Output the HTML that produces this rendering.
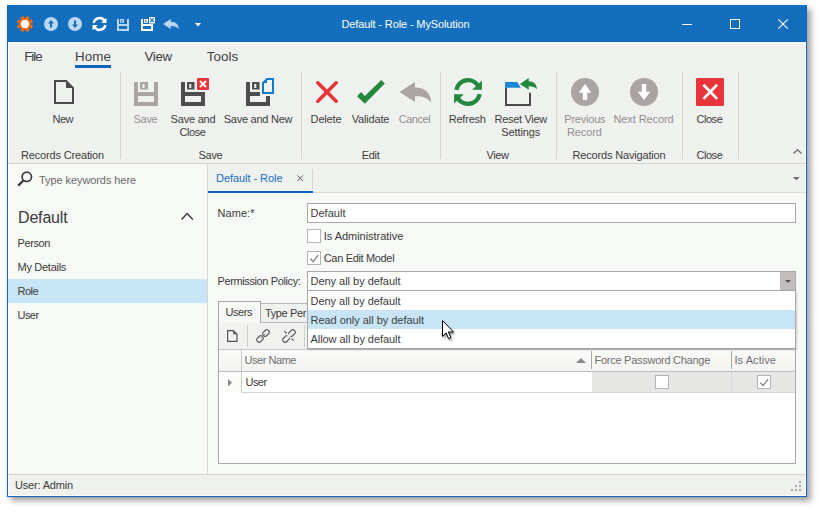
<!DOCTYPE html>
<html><head><meta charset="utf-8"><title>Default - Role - MySolution</title>
<style>
html,body{margin:0;padding:0;}
body{width:820px;height:512px;background:#ffffff;position:relative;overflow:hidden;font-family:"Liberation Sans",sans-serif;}
.a{position:absolute;}
.t{position:absolute;white-space:pre;line-height:normal;}
svg{position:absolute;overflow:visible;}
#win{left:7px;top:5px;width:800px;height:492px;background:#f7f9f6;box-shadow:4px 4px 6px rgba(0,0,0,0.36), -1px 1px 3px rgba(0,0,0,0.06);}
#title{left:7px;top:5px;width:800px;height:37px;background:#146ebe;}
#titleline{left:7px;top:41px;width:800px;height:1px;background:#0f64b4;}
#bl{left:7px;top:5px;width:1px;height:492px;background:#1467b9;}
#br{left:806px;top:5px;width:1px;height:492px;background:#1467b9;}
#bb{left:7px;top:496px;width:800px;height:1px;background:#1467b9;}
#ribbon{left:8px;top:42px;width:798px;height:121px;background:#eff1ee;}
#ribbonline{left:8px;top:163px;width:798px;height:1px;background:#d2d3d1;}
#hl-left{left:8px;top:42px;width:1px;height:454px;background:#fbfbf8;}
#hl-top{left:8px;top:42px;width:798px;height:1px;background:#fbfbf8;}
.sep{position:absolute;top:72px;width:1px;height:87px;background:#d4d5d3;}
#nav{left:9px;top:164px;width:198px;height:310px;background:#f7f9f6;}
#navline{left:207px;top:164px;width:1px;height:310px;background:#d6d7d5;}
#navsel{left:8px;top:279px;width:199px;height:24px;background:#c8e5f8;}
#tabhdr{left:208px;top:164px;width:598px;height:28px;background:#eff1ee;}
#tabhdrline{left:208px;top:192px;width:598px;height:1px;background:#dcdddb;}
#tabul{left:208px;top:191px;width:105px;height:2px;background:#0f65bc;}
#tabsep{left:312px;top:169px;width:1px;height:20px;background:#d4d5d3;}
#homeul{left:75px;top:65px;width:36px;height:3px;background:#0f65bc;}
#status{left:8px;top:475px;width:798px;height:21px;background:#eff1ee;}
#statusline{left:8px;top:474px;width:798px;height:1px;background:#d2d3d1;}
.inp{position:absolute;background:#ffffff;border:1px solid #a8a8a8;box-sizing:border-box;}
.cb{position:absolute;width:14px;height:14px;background:#ffffff;border:1px solid #b4b4b4;box-sizing:border-box;}
#hl-right{left:805px;top:42px;width:1px;height:454px;background:#fbfbf8;}
#hl-bot{left:8px;top:495px;width:798px;height:1px;background:#fbfbf8;}

</style></head>
<body>
<div class="a" id="win"></div>
<div class="a" id="title"></div>
<div class="a" id="titleline"></div>
<div class="a" id="ribbon"></div>
<div class="a" id="hl-top"></div>
<div class="a" id="nav"></div>
<div class="a" id="navline"></div>
<div class="a" id="tabhdr"></div>
<div class="a" id="tabsep"></div>
<div class="a" id="homeul"></div>
<div class="a" id="status"></div>
<div class="a" id="hl-left"></div><div class="a" id="hl-right"></div><div class="a" id="hl-bot"></div>
<div class="a" id="navsel"></div>
<div class="a" id="ribbonline"></div><div class="a" id="tabhdrline"></div><div class="a" id="statusline"></div>
<div class="a" id="tabul"></div>
<div class="a" id="bl"></div><div class="a" id="br"></div><div class="a" id="bb"></div>
<div class="sep" style="left:120px"></div>
<div class="sep" style="left:301px"></div>
<div class="sep" style="left:440px"></div>
<div class="sep" style="left:556px"></div>
<div class="sep" style="left:682px"></div>
<div class="sep" style="left:738px"></div>

<!-- form -->
<div class="inp" style="left:307px;top:203px;width:489px;height:20px"></div>
<div class="cb" style="left:307px;top:229px"></div>
<div class="cb" style="left:307px;top:251px"></div>
<div class="inp" style="left:307px;top:271px;width:489px;height:20px"></div>
<div class="a" style="left:780px;top:272px;width:15px;height:18px;background:#c3bdbd"></div>

<!-- tab panel -->
<div class="a" style="left:218px;top:322px;width:578px;height:142px;background:#ffffff;border:1px solid #a8a8a8;box-sizing:border-box"></div>
<div class="a" style="left:260px;top:303px;width:60px;height:20px;background:#eff1ee;border:1px solid #b8b8b8;box-sizing:border-box"></div>
<div class="a" style="left:218px;top:301px;width:43px;height:22px;background:#f7f9f6;border:1px solid #a8a8a8;border-bottom:none;box-sizing:border-box"></div>
<div class="a" style="left:219px;top:323px;width:576px;height:26px;background:#f1f2f0"></div>
<div class="a" style="left:219px;top:349px;width:576px;height:1px;background:#c4c4c4"></div>
<div class="a" style="left:219px;top:350px;width:576px;height:21px;background:linear-gradient(#fafbf9,#f3f4f2)"></div>
<div class="a" style="left:219px;top:371px;width:576px;height:1px;background:#bdbdbd"></div>
<div class="a" style="left:219px;top:372px;width:22px;height:20px;background:#fbfcfa"></div>
<div class="a" style="left:241px;top:350px;width:1px;height:43px;background:#c8c8c8"></div>
<div class="a" style="left:591px;top:351px;width:1px;height:18px;background:#a6a6a6"></div>
<div class="a" style="left:731px;top:351px;width:1px;height:18px;background:#a6a6a6"></div>
<div class="a" style="left:592px;top:372px;width:203px;height:20px;background:#e6e7e5"></div>
<div class="a" style="left:731px;top:372px;width:1px;height:20px;background:#d8d8d8"></div>
<div class="a" style="left:241px;top:392px;width:554px;height:1px;background:#d6d6d6"></div>
<div class="cb" style="left:655px;top:375px"></div>
<div class="cb" style="left:757px;top:375px"></div>
<div class="a" style="left:247px;top:325px;width:1px;height:22px;background:#d0d1cf"></div>
<div class="a" style="left:304px;top:325px;width:1px;height:22px;background:#d0d1cf"></div>
<!-- QAT icons -->
<svg style="left:17px;top:16px" width="16" height="16" viewBox="-8 -8 16 16"><g fill="#ff6a00"><circle r="5.9"/><rect x="-1.6" y="-8" width="3.2" height="4" transform="rotate(22.5)"/><rect x="-1.6" y="-8" width="3.2" height="4" transform="rotate(67.5)"/><rect x="-1.6" y="-8" width="3.2" height="4" transform="rotate(112.5)"/><rect x="-1.6" y="-8" width="3.2" height="4" transform="rotate(157.5)"/><rect x="-1.6" y="-8" width="3.2" height="4" transform="rotate(202.5)"/><rect x="-1.6" y="-8" width="3.2" height="4" transform="rotate(247.5)"/><rect x="-1.6" y="-8" width="3.2" height="4" transform="rotate(292.5)"/><rect x="-1.6" y="-8" width="3.2" height="4" transform="rotate(337.5)"/></g><circle r="4.2" fill="#ffffff"/></svg>

<svg style="left:44px;top:17px" width="14" height="14" viewBox="0 0 14 14"><circle cx="7" cy="7" r="7" fill="#b9d6f2"/><path d="M7 3 L10 6.6 L8 6.6 L8 10.6 L6 10.6 L6 6.6 L4 6.6 Z" fill="#146ebe"/></svg>
<svg style="left:68px;top:17px" width="14" height="14" viewBox="0 0 14 14"><circle cx="7" cy="7" r="7" fill="#b9d6f2"/><path d="M7 11 L10 7.4 L8 7.4 L8 3.4 L6 3.4 L6 7.4 L4 7.4 Z" fill="#146ebe"/></svg>

<!-- qat refresh -->
<svg style="left:92px;top:17px" width="15" height="14" viewBox="0 0 28 28">
<g fill="none" stroke="#ffffff" stroke-width="5"><path d="M2.4 11.8 A11.75 11.75 0 0 1 24.6 9"/><path d="M25.6 16.2 A11.75 11.75 0 0 1 3.4 19"/></g>
<path d="M28 1.5 L28 12 L17.5 12 Z M0 26.5 L0 16 L10.5 16 Z" fill="#ffffff"/></svg>

<!-- qat save (disabled) -->
<svg style="left:117px;top:19px" width="12" height="12" viewBox="0 0 24 24" fill="#b9d6f2">
<path d="M0 0 H4 V10 H20 V0 H24 V24 H0 Z M4 14 V20 H20 V14 Z" fill-rule="evenodd"/><path d="M6 0 H14 V7.5 H6 Z M8.5 2 V6 H10.5 V2 Z" fill-rule="evenodd"/></svg>
<!-- qat save & close -->
<svg style="left:141px;top:19px" width="12" height="12" viewBox="0 0 24 24" fill="#ffffff">
<path d="M0 0 H4 V10 H24 V24 H0 Z M4 14 V20 H20 V14 Z" fill-rule="evenodd"/><path d="M6 0 H14 V7.5 H6 Z M8.5 2 V6 H10.5 V2 Z" fill-rule="evenodd"/></svg>
<svg style="left:149.2px;top:16.5px" width="6" height="6.5" viewBox="0 0 6 6.5"><rect width="6" height="6.5" fill="#ffffff"/><path d="M1.2 1.4 L4.8 5.1 M4.8 1.4 L1.2 5.1" stroke="#146ebe" stroke-width="1.1"/></svg>
<!-- qat undo -->
<svg style="left:162.7px;top:19px" width="16" height="10.5" viewBox="0 0 32 21"><path d="M0 10 L15.5 0 L15.5 5.5 C25.5 5.5 31.5 11 31.7 20.6 C28.5 16 23.5 14.2 15.5 14.2 L15.5 20 Z" fill="#b9d6f2"/></svg>
<!-- qat dropdown -->
<svg style="left:194.6px;top:23px" width="6" height="3.5" viewBox="0 0 6 3.5"><path d="M0 0 H6 L3 3.5 Z" fill="#ffffff"/></svg>

<!-- window buttons -->
<div class="a" style="left:682px;top:24px;width:10px;height:1px;background:#ffffff"></div>
<div class="a" style="left:730px;top:19px;width:10px;height:10px;border:1px solid #ffffff;box-sizing:border-box"></div>
<svg style="left:778px;top:19px" width="10" height="10" viewBox="0 0 10 10"><path d="M0.3 0.3 L9.7 9.7 M9.7 0.3 L0.3 9.7" stroke="#ffffff" stroke-width="1.1"/></svg>

<!-- New -->
<svg style="left:54px;top:80px" width="20" height="24" viewBox="0 0 20 24"><path d="M1 1 H12 L19 8 V23 H1 Z" fill="none" stroke="#4b4b4b" stroke-width="2"/><path d="M12 1 V8 H19 Z" fill="#4b4b4b"/></svg>
<!-- Save (disabled) -->
<svg style="left:134px;top:82px" width="24" height="24" viewBox="0 0 24 24" fill="#aaa4a4">
<path d="M0 0 H4 V10 H20 V0 H24 V24 H0 Z M4 14 V20 H20 V14 Z" fill-rule="evenodd"/><path d="M6 0 H14 V7.5 H6 Z M8.5 2 V6 H10.5 V2 Z" fill-rule="evenodd"/></svg>
<!-- Save and Close -->
<svg style="left:181px;top:82px" width="24" height="24" viewBox="0 0 24 24" fill="#4d4d4d">
<path d="M0 0 H4 V10 H24 V24 H0 Z M4 14 V20 H20 V14 Z" fill-rule="evenodd"/><path d="M6 0 H13.5 V7.5 H6 Z M8.3 2 V6 H10.3 V2 Z" fill-rule="evenodd"/></svg>
<svg style="left:196px;top:77px" width="14" height="14" viewBox="0 0 14 14"><rect width="14" height="14" fill="#eff1ee"/><rect x="1" y="1" width="12" height="12" rx="1" fill="#e8353c"/><path d="M4 4 L10 10 M10 4 L4 10" stroke="#ffffff" stroke-width="1.8"/></svg>
<!-- Save and New -->
<svg style="left:246px;top:82px" width="24" height="24" viewBox="0 0 24 24" fill="#4d4d4d">
<path d="M0 0 H4 V10 H14 V14 H4 V20 H20 V14 H24 V24 H0 Z"/><path d="M6 0 H13.5 V7.5 H6 Z M8.3 2 V6 H10.3 V2 Z" fill-rule="evenodd"/></svg>
<svg style="left:261px;top:77px" width="14" height="18" viewBox="0 0 14 18"><path d="M0 0 H14 V18 H0 Z" fill="#eff1ee"/><path d="M6 2 H12 V16 H2 V6 Z" fill="#f3f4f2" stroke="#0f7bd2" stroke-width="2"/><path d="M6 2 V6 H2 Z" fill="#0f7bd2"/></svg>
<!-- Delete -->
<svg style="left:316px;top:81px" width="22" height="22" viewBox="0 0 22 22"><path d="M1.8 1.8 L20.2 20.2 M20.2 1.8 L1.8 20.2" stroke="#e8353c" stroke-width="3.6" stroke-linecap="round"/></svg>
<!-- Validate -->
<svg style="left:0px;top:0px" width="820" height="512" viewBox="0 0 820 512" pointer-events="none"><path d="M357.1 96.2 L361.1 92.1 L364.8 96 L381.3 80 L384.8 83.6 L364.8 103.7 Z" fill="#22893f"/>
<!-- Cancel -->
<path d="M399.5 92 L415 82 L415 87.4 C425 87.4 431 93 431.2 102.6 C428 98 423 96.2 415 96.2 L415 102 Z" fill="#aaa4a4"/>
</svg>
<!-- Refresh -->
<svg style="left:454px;top:78px" width="28" height="28" viewBox="0 0 28 28">
<g fill="none" stroke="#22893f" stroke-width="4.4"><path d="M2.36 11.8 A11.85 11.85 0 0 1 24.74 8.99"/><path d="M25.64 16.2 A11.85 11.85 0 0 1 3.26 19.01"/></g>
<path d="M27.9 2.4 L27.9 11.8 L18.2 11.8 Z M0.1 25.6 L0.1 16.2 L9.8 16.2 Z" fill="#22893f"/></svg>
<!-- Reset view -->
<svg style="left:505px;top:78px" width="33" height="28" viewBox="0 0 33 28">
<path d="M0 4 H12.3 L15.8 9.8 H0 Z" fill="#1a87d4"/>
<path d="M1 9.8 V27 H25 V14.7" fill="none" stroke="#4b4b4b" stroke-width="2"/>
<path d="M14.9 6 L23.7 0.1 L23.7 3.3 C29 3.3 31.8 6.5 31.9 11.2 C30 9 27.5 8.3 23.7 8.3 L23.7 11.8 Z" fill="#22893f"/></svg>
<!-- Previous -->
<svg style="left:571px;top:78px" width="28" height="28" viewBox="0 0 28 28"><circle cx="14" cy="14" r="14" fill="#aaa4a4"/><path d="M14 6 L20.3 14.8 L16.2 14.8 L16.2 22.1 L11.8 22.1 L11.8 14.8 L7.7 14.8 Z" fill="#ffffff"/></svg>
<!-- Next -->
<svg style="left:630.2px;top:78px" width="28" height="28" viewBox="0 0 28 28"><circle cx="14" cy="14" r="14" fill="#aaa4a4"/><path d="M14 22.1 L20.3 13.7 L16.2 13.7 L16.2 6 L11.8 6 L11.8 13.7 L7.7 13.7 Z" fill="#ffffff"/></svg>
<!-- Close -->
<svg style="left:696px;top:78px" width="28" height="28" viewBox="0 0 28 28"><rect width="28" height="28" rx="1.2" fill="#e8353c"/><path d="M7.4 6.8 L21.1 20.9 M21.1 6.8 L7.4 20.9" stroke="#ffffff" stroke-width="2.7"/></svg>
<!-- collapse ribbon chevron -->
<svg style="left:792.6px;top:148.6px" width="9" height="5" viewBox="0 0 9 5"><path d="M0.5 4.5 L4.5 0.7 L8.5 4.5" fill="none" stroke="#727272" stroke-width="1.35"/></svg>

<!-- search -->
<svg style="left:17px;top:171px" width="16" height="16" viewBox="0 0 16 16"><circle cx="9.8" cy="5.8" r="4.7" fill="none" stroke="#3c3c3c" stroke-width="1.7"/><path d="M6.2 9.6 L1.2 14.6" stroke="#3c3c3c" stroke-width="2.2"/></svg>
<!-- nav chevron -->
<svg style="left:181px;top:212px" width="13" height="8" viewBox="0 0 13 8"><path d="M0.6 7.4 L6.2 1.5 L11.8 7.4" fill="none" stroke="#3c3c3c" stroke-width="1.5"/></svg>
<!-- tab close x -->
<svg style="left:297px;top:175px" width="7" height="7" viewBox="0 0 7 7"><path d="M0.4 0.4 L6.1 6.1 M6.1 0.4 L0.4 6.1" stroke="#555555" stroke-width="1"/></svg>
<!-- tab dropdown -->
<svg style="left:793px;top:177px" width="7" height="3.5" viewBox="0 0 7 3.5"><path d="M0 0 H6.6 L3.3 3.3 Z" fill="#666666"/></svg>
<!-- checkmarks -->
<svg style="left:307px;top:251px" width="14" height="14" viewBox="0 0 14 14"><path d="M3.4 7.8 L6 10.6 L11.2 4.2" fill="none" stroke="#7d7d7d" stroke-width="1.3"/></svg>
<svg style="left:757px;top:375px" width="14" height="14" viewBox="0 0 14 14"><path d="M3.4 7.8 L6 10.6 L11.2 4.2" fill="none" stroke="#7d7d7d" stroke-width="1.3"/></svg>
<!-- combo arrow -->
<svg style="left:785px;top:280px" width="6" height="3" viewBox="0 0 6 3"><path d="M0 0 H6 L3 3 Z" fill="#555555"/></svg>
<!-- toolbar: new doc -->
<svg style="left:227px;top:330px" width="11" height="12" viewBox="0 0 11 12"><path d="M0.6 0.6 H6.3 L10 4.3 V11.4 H0.6 Z" fill="none" stroke="#505050" stroke-width="1.15"/><path d="M6.3 0.6 V4.3 H10 Z" fill="#505050"/></svg>
<!-- link -->
<svg style="left:256px;top:329px" width="14" height="14" viewBox="0 0 14 14"><g fill="none" stroke="#555555" stroke-width="1.15"><rect x="-2.3" y="-3.4" width="4.6" height="6.8" rx="1.5" transform="translate(10.0 4.0) rotate(45)"/><rect x="-2.3" y="-3.4" width="4.6" height="6.8" rx="1.5" transform="translate(4.0 10.0) rotate(45)"/></g><path d="M4.6 9.35 L9.35 4.6" stroke="#6a6a6a" stroke-width="0.9" stroke-dasharray="1.6 0.9 1.7 0.9 1.6"/></svg>
<!-- unlink -->
<svg style="left:282px;top:329px" width="14" height="14" viewBox="0 0 14 14"><g fill="none" stroke="#555555" stroke-width="1.15"><rect x="-2.3" y="-3.4" width="4.6" height="6.8" rx="1.5" transform="translate(10.0 4.0) rotate(45)"/><rect x="-2.3" y="-3.4" width="4.6" height="6.8" rx="1.5" transform="translate(4.0 10.0) rotate(45)"/></g><rect x="-1.45" y="-1.6" width="2.9" height="3.2" fill="#eff1ee" transform="translate(6.97 6.97) rotate(45)"/><path d="M2.3 2.1 L4.7 4.5 M9.3 9.3 L11.7 11.7" stroke="#555555" stroke-width="1.1" fill="none"/></svg>
<!-- row indicator -->
<svg style="left:228px;top:378.5px" width="4" height="7.5" viewBox="0 0 4 7.5"><path d="M0 0 L4 3.75 L0 7.5 Z" fill="#888888"/></svg>
<!-- sort arrow -->
<svg style="left:576px;top:357.5px" width="10" height="5" viewBox="0 0 10 5"><path d="M0 5 L5 0 L10 5 Z" fill="#8a8a8a"/></svg>
<!-- grip -->
<svg style="left:791px;top:481px" width="10" height="10" viewBox="0 0 10 10" fill="#a9a9a9" shape-rendering="crispEdges"><rect x="8" y="0" width="2" height="2"/><rect x="4" y="4" width="2" height="2"/><rect x="8" y="4" width="2" height="2"/><rect x="0" y="8" width="2" height="2"/><rect x="4" y="8" width="2" height="2"/><rect x="8" y="8" width="2" height="2"/></svg>

<!-- text -->
<span class='t' style='left:341.50px;top:18.05px;font-size:11px;color:#ffffff;letter-spacing:-0.128px'>Default - Role - MySolution</span>
<span class='t' style='left:24.20px;top:48.94px;font-size:13.33px;color:#404040;letter-spacing:-0.996px'>File</span>
<span class='t' style='left:75.10px;top:48.94px;font-size:13.33px;color:#404040;letter-spacing:0.059px'>Home</span>
<span class='t' style='left:144.50px;top:48.94px;font-size:13.33px;color:#404040;letter-spacing:-0.364px'>View</span>
<span class='t' style='left:206.80px;top:48.94px;font-size:13.33px;color:#404040;letter-spacing:0.075px'>Tools</span>
<span class='t' style='left:52.50px;top:112.55px;font-size:11px;color:#3c3c3c;letter-spacing:-0.505px'>New</span>
<span class='t' style='left:133.62px;top:112.55px;font-size:11px;color:#938e8e;letter-spacing:-0.332px'>Save</span>
<span class='t' style='left:170.62px;top:112.55px;font-size:11px;color:#3c3c3c;letter-spacing:-0.217px'>Save and</span>
<span class='t' style='left:179.50px;top:125.55px;font-size:11px;color:#3c3c3c;letter-spacing:-0.425px'>Close</span>
<span class='t' style='left:223.75px;top:112.55px;font-size:11px;color:#3c3c3c;letter-spacing:-0.254px'>Save and New</span>
<span class='t' style='left:310.62px;top:112.55px;font-size:11px;color:#3c3c3c;letter-spacing:-0.174px'>Delete</span>
<span class='t' style='left:351.75px;top:112.55px;font-size:11px;color:#3c3c3c;letter-spacing:-0.180px'>Validate</span>
<span class='t' style='left:398.65px;top:112.55px;font-size:11px;color:#938e8e;letter-spacing:-0.458px'>Cancel</span>
<span class='t' style='left:448.75px;top:112.55px;font-size:11px;color:#3c3c3c;letter-spacing:-0.219px'>Refresh</span>
<span class='t' style='left:494.50px;top:112.55px;font-size:11px;color:#3c3c3c;letter-spacing:-0.294px'>Reset View</span>
<span class='t' style='left:501.25px;top:125.55px;font-size:11px;color:#3c3c3c;letter-spacing:-0.094px'>Settings</span>
<span class='t' style='left:564.30px;top:112.55px;font-size:11px;color:#938e8e;letter-spacing:-0.225px'>Previous</span>
<span class='t' style='left:567.05px;top:125.55px;font-size:11px;color:#938e8e;letter-spacing:-0.128px'>Record</span>
<span class='t' style='left:613.50px;top:112.55px;font-size:11px;color:#938e8e;letter-spacing:-0.104px'>Next Record</span>
<span class='t' style='left:696.40px;top:112.55px;font-size:11px;color:#3c3c3c;letter-spacing:-0.425px'>Close</span>
<span class='t' style='left:21.00px;top:148.79px;font-size:11px;color:#3c3c3c;letter-spacing:-0.162px'>Records Creation</span>
<span class='t' style='left:198.62px;top:148.79px;font-size:11px;color:#3c3c3c;letter-spacing:-0.332px'>Save</span>
<span class='t' style='left:361.73px;top:148.79px;font-size:11px;color:#3c3c3c;letter-spacing:-0.305px'>Edit</span>
<span class='t' style='left:486.50px;top:148.79px;font-size:11px;color:#3c3c3c;letter-spacing:-0.414px'>View</span>
<span class='t' style='left:572.50px;top:148.79px;font-size:11px;color:#3c3c3c;letter-spacing:-0.167px'>Records Navigation</span>
<span class='t' style='left:696.40px;top:148.79px;font-size:11px;color:#3c3c3c;letter-spacing:-0.425px'>Close</span>
<span class='t' style='left:39.00px;top:173.79px;font-size:11px;color:#6a6a6a;letter-spacing:-0.080px'>Type keywords here</span>
<span class='t' style='left:18.00px;top:208.52px;font-size:16px;color:#3a3a3a;letter-spacing:-0.172px'>Default</span>
<span class='t' style='left:17.50px;top:236.79px;font-size:11px;color:#3b3b3b;letter-spacing:-0.393px'>Person</span>
<span class='t' style='left:17.50px;top:260.80px;font-size:11px;color:#3b3b3b;letter-spacing:-0.284px'>My Details</span>
<span class='t' style='left:17.50px;top:284.55px;font-size:11px;color:#3b3b3b;letter-spacing:-0.531px'>Role</span>
<span class='t' style='left:17.50px;top:308.80px;font-size:11px;color:#3b3b3b;letter-spacing:-0.559px'>User</span>
<span class='t' style='left:216.00px;top:172.04px;font-size:11px;color:#1b6ec2;letter-spacing:-0.055px'>Default - Role</span>
<span class='t' style='left:217.50px;top:207.04px;font-size:11px;color:#3b3b3b;letter-spacing:0.052px'>Name:*</span>
<span class='t' style='left:310.50px;top:207.04px;font-size:11px;color:#3b3b3b;letter-spacing:0.020px'>Default</span>
<span class='t' style='left:323.75px;top:230.04px;font-size:11px;color:#3b3b3b;letter-spacing:-0.035px'>Is Administrative</span>
<span class='t' style='left:323.75px;top:252.04px;font-size:11px;color:#3b3b3b;letter-spacing:-0.337px'>Can Edit Model</span>
<span class='t' style='left:217.50px;top:275.05px;font-size:11px;color:#3b3b3b;letter-spacing:-0.381px'>Permission Policy:</span>
<span class='t' style='left:310.50px;top:275.05px;font-size:11px;color:#3b3b3b;letter-spacing:-0.026px'>Deny all by default</span>
<span class='t' style='left:225.50px;top:306.05px;font-size:11px;color:#3b3b3b;letter-spacing:-0.447px'>Users</span>
<span class='t' style='left:265.00px;top:306.85px;font-size:11px;color:#3b3b3b;letter-spacing:-0.379px'>Type Per</span>
<span class='t' style='left:244.50px;top:354.05px;font-size:11px;color:#6e6e6e;letter-spacing:-0.458px'>User Name</span>
<span class='t' style='left:594.50px;top:354.05px;font-size:11px;color:#6e6e6e;letter-spacing:-0.265px'>Force Password Change</span>
<span class='t' style='left:734.50px;top:354.05px;font-size:11px;color:#6e6e6e;letter-spacing:0.059px'>Is Active</span>
<span class='t' style='left:245.50px;top:375.80px;font-size:11px;color:#3b3b3b;letter-spacing:-0.559px'>User</span>
<span class='t' style='left:15.00px;top:479.05px;font-size:11px;color:#3b3b3b;letter-spacing:-0.175px'>User: Admin</span>
<!-- dropdown -->
<div class="a" style="left:307px;top:290px;width:489px;height:59px;background:#ffffff;border:1px solid #a8a8a8;box-sizing:border-box;box-shadow:1px 1px 2px rgba(0,0,0,0.16)"></div>
<div class="a" style="left:308px;top:310px;width:487px;height:19px;background:#c8e5f8"></div>

<span class='t' style='left:310.50px;top:295.05px;font-size:11px;color:#3c3c3c;letter-spacing:-0.026px'>Deny all by default</span>
<span class='t' style='left:310.50px;top:313.80px;font-size:11px;color:#3c3c3c;letter-spacing:-0.036px'>Read only all by default</span>
<span class='t' style='left:310.50px;top:332.55px;font-size:11px;color:#3c3c3c;letter-spacing:-0.055px'>Allow all by default</span>
<svg style="left:442px;top:320px;filter:drop-shadow(1px 2px 1.2px rgba(0,0,0,0.4))" width="14" height="21" viewBox="0 0 14 21"><path d="M0.5 0.6 L0.5 16.3 L4.1 12.9 L6.6 18.6 L8.9 17.6 L6.4 12 L11.6 12 Z" fill="#ffffff" stroke="#000000" stroke-width="1" stroke-linejoin="miter"/></svg>

</body></html>
